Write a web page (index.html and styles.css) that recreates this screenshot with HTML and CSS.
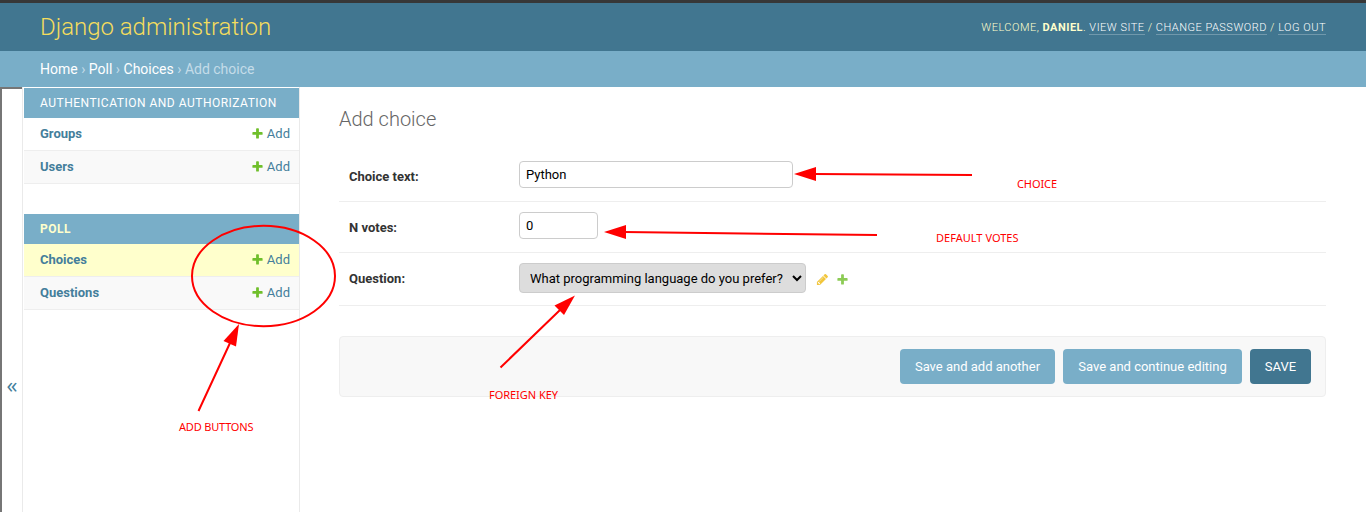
FILE: index.html
```html
<!DOCTYPE html>
<html lang="en">
<head>
<meta charset="utf-8">
<title>Add choice | Django site admin</title>
<link rel="stylesheet" href="styles.css">
</head>
<body>
<svg class="defs" width="0" height="0" aria-hidden="true">
  <symbol id="icon-add" viewBox="0 0 1792 1792"><path d="M1600 796v192q0 40-28 68t-68 28h-416v416q0 40-28 68t-68 28h-192q-40 0-68-28t-28-68v-416h-416q-40 0-68-28t-28-68v-192q0-40 28-68t68-28h416v-416q0-40 28-68t68-28h192q40 0 68 28t28 68v416h416q40 0 68 28t28 68z"/></symbol>
  <symbol id="icon-change" viewBox="0 0 1792 1792"><path d="M491 1536l91-91-235-235-91 91v107h128v128h107zm523-928q0-22-22-22-10 0-17 7l-542 542q-7 7-7 17 0 22 22 22 10 0 17-7l542-542q7-7 7-17zm-54-192l416 416-832 832h-416v-416zm683 96q0 53-37 90l-166 166-416-416 166-165q36-38 90-38 53 0 91 38l235 234q37 39 37 91z"/></symbol>
</svg>
<div class="container">
  <header class="header">
    <h1 class="site-name">Django administration</h1>
    <div class="user-tools">Welcome, <strong>Daniel</strong>. <a>View site</a> / <a>Change password</a> / <a>Log out</a></div>
  </header>
  <nav class="breadcrumbs"><a>Home</a> › <a>Poll</a> › <a>Choices</a> › Add choice</nav>
  <div class="main">
    <button class="toggle-nav" aria-label="Toggle navigation"><span>«</span></button>
    <nav class="sidebar">
      <section class="module">
        <h2 class="caption">Authentication and Authorization</h2>
        <div class="model"><a class="model-name">Groups</a><a class="add-link"><svg class="icon add"><use href="#icon-add"/></svg>Add</a></div>
        <div class="model alt"><a class="model-name">Users</a><a class="add-link"><svg class="icon add"><use href="#icon-add"/></svg>Add</a></div>
      </section>
      <section class="module current-app">
        <h2 class="caption">Poll</h2>
        <div class="model current"><a class="model-name">Choices</a><a class="add-link"><svg class="icon add"><use href="#icon-add"/></svg>Add</a></div>
        <div class="model alt"><a class="model-name">Questions</a><a class="add-link"><svg class="icon add"><use href="#icon-add"/></svg>Add</a></div>
      </section>
    </nav>
    <main class="content">
      <h1 class="title">Add choice</h1>
      <form>
        <div class="row"><label for="text">Choice text:</label><input class="text-input" id="text" type="text" value="Python"></div>
        <div class="row"><label for="votes">N votes:</label><input class="number-input" id="votes" type="text" value="0"></div>
        <div class="row select-row"><label for="question">Question:</label>
          <select id="question"><option>What programming language do you prefer?</option></select>
          <svg class="icon related change"><use href="#icon-change"/></svg>
          <svg class="icon related add"><use href="#icon-add"/></svg>
        </div>
        <div class="submit-row">
          <button type="button" class="button b-another">Save and add another</button>
          <button type="button" class="button b-continue">Save and continue editing</button>
          <button type="button" class="button b-save default">SAVE</button>
        </div>
      </form>
    </main>
  </div>
</div>
<svg class="annotations" width="1366" height="512" viewBox="0 0 1366 512">
  <ellipse cx="263.500" cy="276" rx="71.500" ry="50.200"/>
  <path d="M972 175L814 174M877 235L624 232M500.500 367.500L560 310M198.500 411L230 343"/>
  <g class="heads">
    <path d="M794 174L816 167V181Z"/>
    <path d="M604 232L626 225V239Z"/>
    <path d="M575 295.500L554.500 305.500L564 315Z"/>
    <path d="M239 324L223.500 341L236 346.500Z"/>
  </g>
  <g class="notes">
    <text x="1017" y="188" textLength="40">CHOICE</text>
    <text x="936" y="242" textLength="82.500">DEFAULT VOTES</text>
    <text x="489" y="399" textLength="69">FOREIGN KEY</text>
    <text x="179" y="431" textLength="74.500">ADD BUTTONS</text>
  </g>
</svg>
</body>
</html>
```
FILE: styles.css
```css
* { box-sizing: border-box; }

body {
  margin: 0;
  font-family: Roboto, "Liberation Sans", sans-serif;
  font-size: 14px;
  color: #333;
  background: #fff;
  overflow: hidden;
}

.defs { position: absolute; }

.container {
  display: flex;
  flex-direction: column;
  height: 512px;
  border-top: 3px solid #373737;
}

.header {
  display: flex;
  flex: none;
  align-items: center;
  justify-content: space-between;
  height: 48px;
  padding: 0 40px;
  background: #417690;
  color: #ffc;
}

.site-name {
  margin: 0;
  font-size: 24px;
  font-weight: 300;
  letter-spacing: -0.02px;
  line-height: 28px;
  color: #f5dd5d;
}

.user-tools {
  padding-top: 2px;
  font-size: 11px;
  font-weight: 300;
  letter-spacing: 0.5px;
  line-height: 14px;
  text-transform: uppercase;
}

.user-tools strong { font-weight: 700; }

.user-tools a {
  color: #fff;
  border-bottom: 1px solid rgba(255, 255, 255, 0.25);
}

.breadcrumbs {
  flex: none;
  height: 36px;
  padding: 10px 40px;
  line-height: 16px;
  background: #79aec8;
  color: #c4dce8;
}

.breadcrumbs a { color: #fff; }

.main { display: flex; flex: 1; min-height: 0; }

.toggle-nav {
  display: flex;
  align-items: center;
  justify-content: center;
  width: 22px;
  padding: 0;
  border: 0 solid #767676;
  border-width: 2px 0 0 2px;
  background: #fff;
  color: #447e9b;
  font: 22px/20px "Open Sans", sans-serif;
}

.toggle-nav span { height: 20px; margin-top: 166px; }

.sidebar {
  width: 278px;
  padding: 1px 0 0 1px;
  border: 1px solid #eaeaea;
  border-width: 0 1px;
}

.module { margin-bottom: 30px; }

.caption {
  margin: 0;
  height: 30px;
  padding-left: 16px;
  font-size: 12px;
  font-weight: 400;
  letter-spacing: 0.5px;
  line-height: 30px;
  text-transform: uppercase;
  background: #79aec8;
  color: #fff;
}

.current-app .caption { color: #ffc; font-weight: 700; }

.model {
  display: flex;
  align-items: center;
  justify-content: space-between;
  height: 33px;
  padding: 0 9px 1px 16px;
  border-bottom: 1px solid #eee;
  font-size: 13px;
  line-height: 16px;
  color: #447e9b;
}

.model.alt { background: #f9f9f9; }
.model.current { background: #ffc; }
.model-name { font-weight: 700; }
.add-link { display: flex; align-items: center; gap: 3px; }

.icon { width: 13px; height: 13px; flex: none; }
.add { fill: #70bf2b; }
.change { fill: #efb80b; }

.content { flex: 1; padding: 20px 40px 0 39px; }

.title {
  margin: 0 0 19px;
  font-size: 20px;
  font-weight: 300;
  line-height: 24px;
  color: #666;
}

.row {
  display: flex;
  align-items: flex-start;
  height: 51px;
  padding: 10px;
  border-bottom: 1px solid #eee;
}

.row:first-child { height: 52px; padding-top: 11px; }
.select-row { height: 53px; }

.row label {
  width: 170px;
  padding-top: 8px;
  font-size: 13px;
  font-weight: 700;
  line-height: 16px;
}

.row input {
  height: 27px;
  padding: 5px 6px;
  border: 1px solid #ccc;
  border-radius: 4px;
  font: 13px/15px Roboto, sans-serif;
  color: #000;
}

.text-input { width: 274px; }
.number-input { width: 79px; }

.row select {
  width: 287px;
  height: 30px;
  padding: 5px 6px;
  border: 1px solid #ccc;
  border-radius: 4px;
  background-color: #ddd;
  font: 13px/15px Roboto, sans-serif;
  color: #000;
}

.related { margin: 10px 0 0 7px; opacity: 0.8; }
.related.change { margin-left: 10px; }

.submit-row {
  display: flex;
  justify-content: flex-end;
  gap: 8px;
  height: 61px;
  margin-top: 30px;
  padding: 12px 14px;
  border: 1px solid #eee;
  border-radius: 4px;
  background: #f8f8f8;
}

.button {
  height: 35px;
  padding: 0;
  border: 0;
  border-radius: 4px;
  background: #79aec8;
  color: #fff;
  font: 13px/15px Roboto, sans-serif;
}

.b-another { width: 155px; }
.b-continue { width: 179px; }
.b-save { width: 61px; }
.button.default { background: #417690; }

.annotations {
  position: absolute;
  top: 0;
  left: 0;
  fill: none;
  stroke: #f00;
  stroke-width: 2;
  pointer-events: none;
}

.heads, .notes { fill: #f00; stroke: none; }
.notes { font: 11px "Noto Sans", sans-serif; }
```
